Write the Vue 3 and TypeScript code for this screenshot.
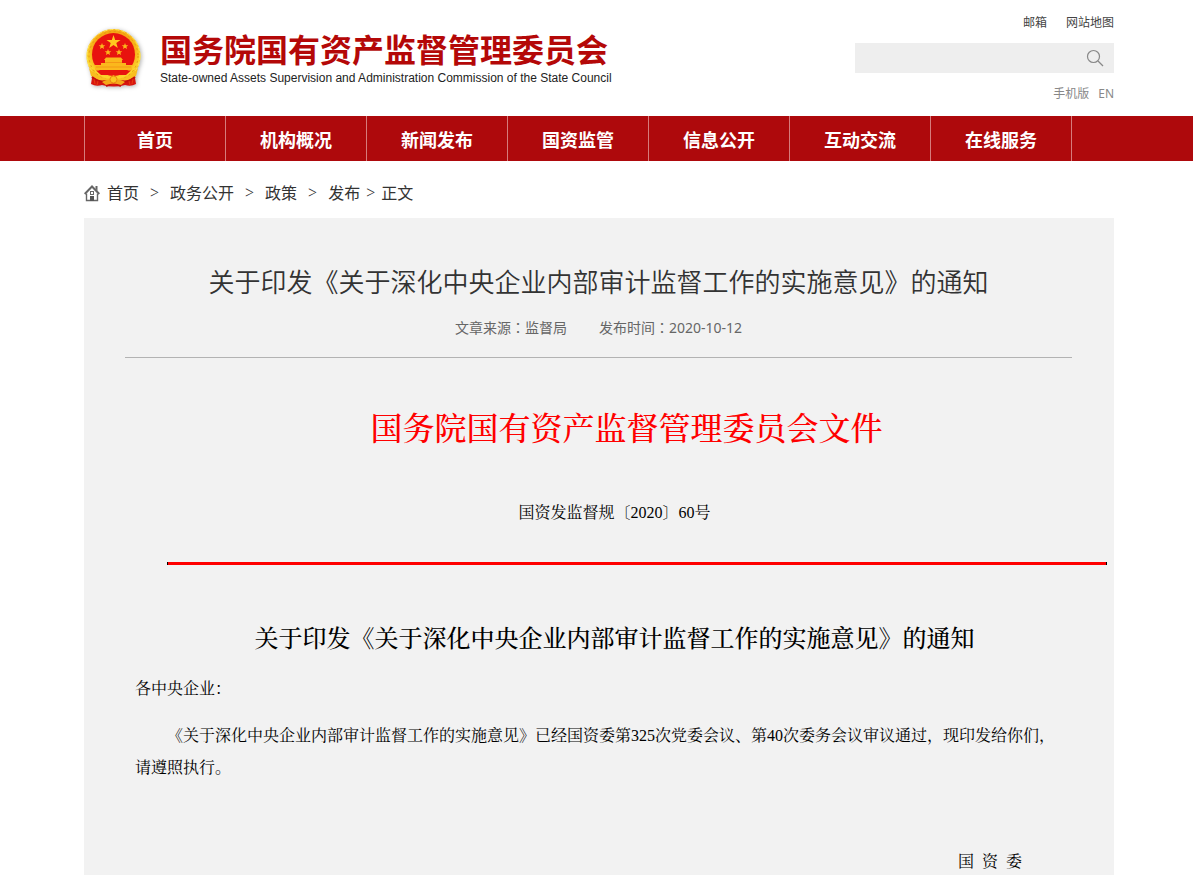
<script setup lang="ts">
interface LinkItem {
  label: string
  href: string
}

const navItems: LinkItem[] = [
  { label: '首页', href: '#home' },
  { label: '机构概况', href: '#about' },
  { label: '新闻发布', href: '#news' },
  { label: '国资监管', href: '#supervision' },
  { label: '信息公开', href: '#disclosure' },
  { label: '互动交流', href: '#interaction' },
  { label: '在线服务', href: '#services' },
]

const crumbs: LinkItem[] = [
  { label: '首页', href: '#home' },
  { label: '政务公开', href: '#affairs' },
  { label: '政策', href: '#policy' },
  { label: '发布', href: '#release' },
]
</script>

<template>
  <div class="page">
    <header class="shell">
      <div class="wrap header">
        <a class="brand" href="#home">
          <svg class="emblem" viewBox="0 0 60 62" aria-hidden="true">
            <defs>
              <radialGradient id="gold" cx="50%" cy="40%" r="60%">
                <stop offset="0.6" stop-color="#f6a514" />
                <stop offset="0.85" stop-color="#fcd62c" />
                <stop offset="1" stop-color="#ee9a12" />
              </radialGradient>
            </defs>
            <path d="M9 44 L7 56 Q12 59 18 57 Q30 60 41 57 Q47 59 52 56 L50 44Z" fill="#d8150f" />
            <circle cx="29.500" cy="28" r="27" fill="url(#gold)" />
            <circle cx="29.500" cy="28" r="24.500" fill="none" stroke="#e59a10" stroke-width="1" stroke-dasharray="2 3" />
            <circle cx="29.500" cy="28" r="26.500" fill="none" stroke="#ffe75a" stroke-width="1" stroke-dasharray="4 2" />
            <circle cx="29.500" cy="26.500" r="21.500" fill="#e8130f" />
            <path d="M29.500 7 L31.200 12 H36.500 L32.300 15 L33.800 20 L29.500 17 L25.200 20 L26.700 15 L22.500 12 H27.800Z" fill="#ffc91f" />
            <g fill="#fbb81c">
              <path d="M18 15 l.9 2.300 h2.400 l-1.900 1.500 .7 2.300 -2.100 -1.400 -2.100 1.400 .7 -2.300 -1.900 -1.500 h2.400Z" />
              <path d="M41 15 l.9 2.300 h2.400 l-1.900 1.500 .7 2.300 -2.100 -1.400 -2.100 1.400 .7 -2.300 -1.900 -1.500 h2.400Z" />
              <path d="M24 21 l.9 2.300 h2.400 l-1.900 1.500 .7 2.300 -2.100 -1.400 -2.100 1.400 .7 -2.300 -1.900 -1.500 h2.400Z" />
              <path d="M35 21 l.9 2.300 h2.400 l-1.900 1.500 .7 2.300 -2.100 -1.400 -2.100 1.400 .7 -2.300 -1.900 -1.500 h2.400Z" />
              <path d="M22 29.500 H37 L39 32 H20Z" />
              <path d="M21 32 H38 V35 H21Z" />
              <path d="M17 35 H42 V37 H48 V42 H11 V37 H17Z" />
            </g>
            <path d="M12 39 H47 M21 34.500 H38" stroke="#f08a12" stroke-width="0.700" />
            <path d="M12 42.500 H47 L42 47 H17Z" fill="#e8130f" />
            <path d="M5 40 Q13 50 24 51 L29.500 47 L35 51 Q46 50 54 40 L52 48 Q45 53 36 54 L29.500 51 L23 54 Q14 53 7 48Z" fill="#f9be20" />
            <path d="M8 49 Q15 55 22 53 L26 56 L22 58 M51 49 Q44 55 37 53 L33 56 L37 58" fill="none" stroke="#c70f0c" stroke-width="2" />
            <path d="M18 54 Q24 50 29.500 53 Q35 50 41 54 L37 57 Q29.500 54 22 57Z" fill="#f5a81a" />
            <circle cx="29.500" cy="51.500" r="3.500" fill="#fbc522" stroke="#e8780f" stroke-width="0.800" />
            <path d="M10 51 L11 56 M14 53 L13 57 M49 51 L48 56 M45 53 L46 57" stroke="#e8480f" stroke-width="0.800" />
          </svg>
          <span class="brand-text">
            <span class="brand-cn">国务院国有资产监督管理委员会</span>
            <span class="brand-en">State-owned Assets Supervision and Administration Commission of the State Council</span>
          </span>
        </a>
        <div class="tools">
          <div class="top-links">
            <a href="#mail">邮箱</a>
            <a href="#sitemap">网站地图</a>
          </div>
          <form class="search" role="search" @submit.prevent>
            <input type="text" aria-label="搜索" />
            <button type="submit" aria-label="搜索">
              <svg viewBox="0 0 18 18" aria-hidden="true">
                <circle cx="7.500" cy="7.500" r="6" />
                <path d="M12 12 L17 17" />
              </svg>
            </button>
          </form>
          <div class="sub-links">
            <a href="#mobile">手机版</a>
            <a href="#en">EN</a>
          </div>
        </div>
      </div>
    </header>

    <nav class="shell nav" aria-label="主导航">
      <ul class="wrap nav-list">
        <li v-for="item in navItems" :key="item.href">
          <a :href="item.href">{{ item.label }}</a>
        </li>
      </ul>
    </nav>

    <main class="shell">
      <div class="wrap">
        <div class="crumbs">
          <svg class="home" viewBox="0 0 16 17" aria-hidden="true">
            <path d="M0.700 9 L8 1.500 L15.300 9" fill="none" stroke="#666" stroke-width="2" />
            <path d="M11.500 1 H13.500 V6 L11.500 4Z" fill="#666" />
            <path d="M2.500 8.500 V15.500 H13.500 V8.500" fill="none" stroke="#666" stroke-width="1.400" />
            <rect x="6.500" y="6.500" width="3" height="3" fill="none" stroke="#666" />
            <rect x="6" y="11" width="4" height="5" fill="#555" />
          </svg>
          <template v-for="(crumb, i) in crumbs" :key="crumb.href">
            <a :href="crumb.href">{{ crumb.label }}</a>
            <span class="sep" :class="{ last: i === crumbs.length - 1 }">&gt;</span>
          </template>
          <span>正文</span>
        </div>

        <article class="article">
          <h1>关于印发《关于深化中央企业内部审计监督工作的实施意见》的通知</h1>
          <div class="meta">
            <span>文章来源<span class="colon">：</span>监督局</span>
            <span>发布时间<span class="colon">：</span><time datetime="2020-10-12">2020-10-12</time></span>
          </div>
          <div class="doc">
            <p class="doc-head">国务院国有资产监督管理委员会文件</p>
            <p class="doc-no">国资发监督规〔2020〕60号</p>
            <hr />
            <h2>关于印发《关于深化中央企业内部审计监督工作的实施意见》的通知</h2>
            <p class="salute">各中央企业：</p>
            <p class="body-text">《关于深化中央企业内部审计监督工作的实施意见》已经国资委第325次党委会议、第40次委务会议审议通过，现印发给你们，请遵照执行。</p>
            <p class="sign">国&nbsp;&nbsp;资&nbsp;&nbsp;委</p>
          </div>
        </article>
      </div>
    </main>
  </div>
</template>

<style>
body {
  margin: 0;
  background: #fff;
}
</style>

<style scoped>
.page {
  font-family: "Noto Sans", "Noto Sans CJK SC", sans-serif;
  color: #333;
}
a {
  color: inherit;
  text-decoration: none;
}
h1,
h2,
p,
ul {
  margin: 0;
  padding: 0;
}
.shell {
  padding-left: 5px;
}
.wrap {
  max-width: 1030px;
  margin: 0 auto;
}
.header {
  display: flex;
  justify-content: space-between;
  min-height: 116px;
}
.brand {
  display: flex;
  align-items: flex-start;
  gap: 16px;
  padding-top: 28px;
}
.emblem {
  width: 60px;
  height: 62px;
  filter: drop-shadow(1px 1px 2px rgba(0, 0, 0, 0.3));
}
.brand-text {
  display: flex;
  flex-direction: column;
  white-space: nowrap;
}
.brand-cn {
  font: 700 32px/40px "Noto Sans CJK SC", sans-serif;
  color: #b40808;
}
.brand-en {
  padding-top: 2px;
  font: 12px/16px "Liberation Sans", Arial, sans-serif;
  color: #222;
}
.tools {
  width: 259px;
  padding-top: 13px;
  font-size: 12px;
  line-height: 20px;
}
.top-links,
.sub-links {
  display: flex;
  justify-content: flex-end;
}
.top-links {
  gap: 19px;
  color: #444;
}
.sub-links {
  gap: 9px;
  color: #888;
}
.search {
  display: flex;
  height: 30px;
  margin: 10px 0 11px;
  background: #eee;
}
.search input {
  flex: 1;
  min-width: 0;
  padding: 0 8px;
  border: 0;
  background: transparent;
}
.search button {
  display: flex;
  align-items: center;
  justify-content: center;
  width: 38px;
  padding: 0;
  border: 0;
  background: transparent;
}
.search svg {
  width: 18px;
  height: 18px;
  fill: none;
  stroke: #888;
  stroke-width: 1.2;
}
.nav {
  background: #ae090c;
}
.nav-list {
  display: flex;
  list-style: none;
}
.nav-list li {
  box-sizing: border-box;
  width: 141px;
  border-left: 1px solid #d67b7c;
}
.nav-list li:last-child {
  width: 142px;
  border-right: 1px solid #d67b7c;
}
.nav-list a {
  display: block;
  font-size: 18px;
  font-weight: 700;
  line-height: 45px;
  padding-top: 2px;
  margin-bottom: -2px;
  color: #fff;
  text-align: center;
}
.crumbs {
  display: flex;
  align-items: center;
  padding: 16px 0 9px;
  font-size: 16px;
  line-height: 32px;
}
.home {
  width: 16px;
  height: 17px;
  margin-right: 7px;
}
.sep {
  margin: 0 11px;
  font-size: 16px;
  font-family: "Liberation Serif", serif;
}
.sep.last {
  margin: 0 6px;
}
.article {
  padding: 43px 42px 0 41px;
  background: #f2f2f2;
}
h1 {
  font-size: 26px;
  font-weight: 350;
  line-height: 42px;
  text-align: center;
}
.meta {
  display: flex;
  justify-content: center;
  gap: 32px;
  padding: 12px 0 17px;
  border-bottom: 1px solid #b3b3b3;
  font-size: 14px;
  line-height: 24px;
  color: #666;
}
.colon {
  font-family: "Noto Sans CJK TC", sans-serif;
}
.doc {
  padding: 47px 10px 0;
  font-family: "Liberation Serif", "Noto Serif CJK SC", "Noto Sans CJK SC", serif;
  font-size: 16px;
  line-height: 32px;
  color: #000;
}
.doc-head {
  font-size: 32px;
  font-weight: 500;
  line-height: 48px;
  text-indent: 56px;
  text-align: center;
  color: #f00;
}
.doc-no {
  margin-top: 44px;
  text-indent: 32px;
  text-align: center;
}
hr {
  height: 3px;
  margin: 33px -45px 0 32px;
  border: solid #000;
  border-width: 0 1px;
  background: #f00;
}
h2 {
  margin-top: 58px;
  font-size: 24px;
  font-weight: 500;
  text-indent: 32px;
  text-align: center;
}
.salute {
  margin-top: 18px;
}
.body-text {
  margin-top: 15px;
  text-indent: 32px;
}
.sign {
  margin-top: 64px;
  padding-right: 40px;
  line-height: 28px;
  text-align: right;
}
</style>
